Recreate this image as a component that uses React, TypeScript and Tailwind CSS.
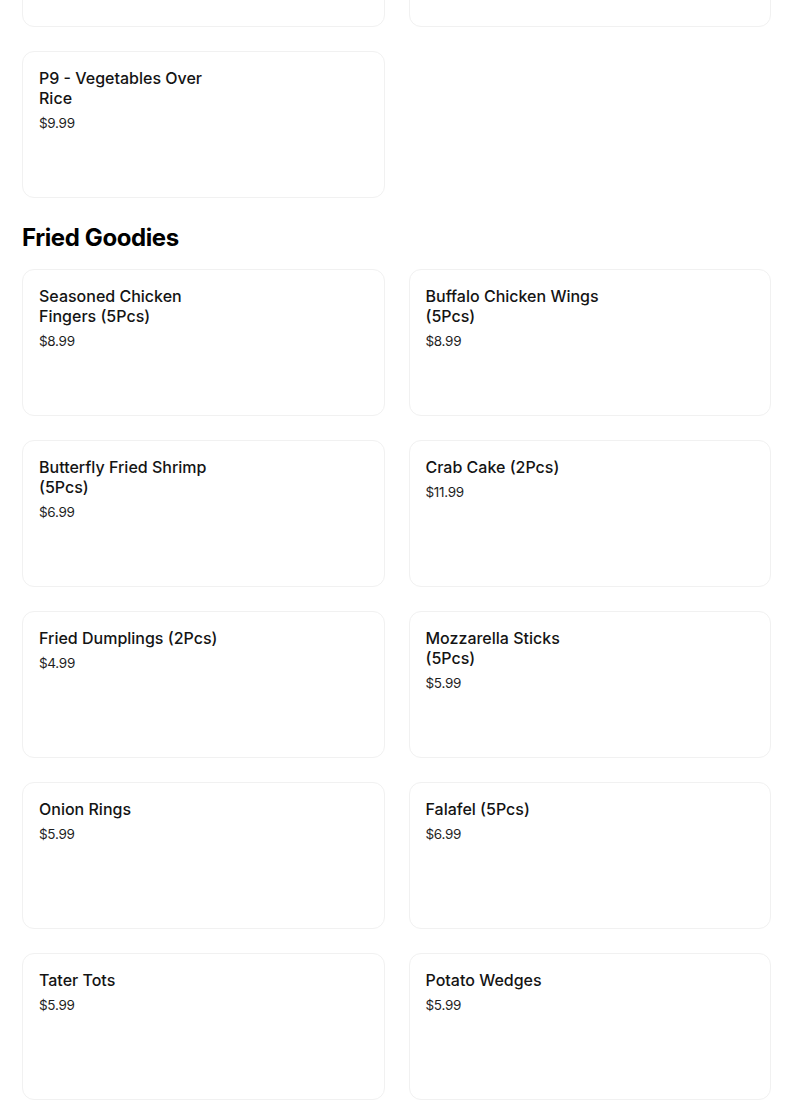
import React from "react";

type Item = { name: string; price: string };

const fried: Item[] = [
  { name: "Seasoned Chicken Fingers (5Pcs)", price: "$8.99" },
  { name: "Buffalo Chicken Wings (5Pcs)", price: "$8.99" },
  { name: "Butterfly Fried Shrimp (5Pcs)", price: "$6.99" },
  { name: "Crab Cake (2Pcs)", price: "$11.99" },
  { name: "Fried Dumplings (2Pcs)", price: "$4.99" },
  { name: "Mozzarella Sticks (5Pcs)", price: "$5.99" },
  { name: "Onion Rings", price: "$5.99" },
  { name: "Falafel (5Pcs)", price: "$6.99" },
  { name: "Tater Tots", price: "$5.99" },
  { name: "Potato Wedges", price: "$5.99" },
];

function Card({ item }: { item?: Item }) {
  return (
    <div className="h-[147px] rounded-[12px] border border-[#f1f1f1] bg-white px-4 pt-4">
      {item && (
        <>
          <div className="max-w-[184px] text-[16px] leading-[20px] font-medium text-[#141414]">
            {item.name}
          </div>
          <div className="mt-[5px] text-[13.5px] leading-[20px] text-[#1f1f1f] tracking-[-0.3px]">
            {item.price}
          </div>
        </>
      )}
    </div>
  );
}

export default function App() {
  return (
    <div
      className="min-h-[1110px] bg-white overflow-hidden"
      style={{ fontFamily: "Inter, 'Noto Sans', sans-serif" }}
    >
      <div className="pl-[22px] w-[771px]">
        <div className="grid grid-cols-2 gap-x-[24px] gap-y-[24px] -mt-[120px]">
          <Card />
          <Card />
          <Card item={{ name: "P9 - Vegetables Over Rice", price: "$9.99" }} />
        </div>
        <h2 className="mt-[24px] text-[24px] leading-[32px] font-bold text-black tracking-[-0.4px]">
          Fried Goodies
        </h2>
        <div className="mt-[15px] grid grid-cols-2 gap-x-[24px] gap-y-[24px]">
          {fried.map((it) => (
            <Card key={it.name} item={it} />
          ))}
        </div>
      </div>
    </div>
  );
}
